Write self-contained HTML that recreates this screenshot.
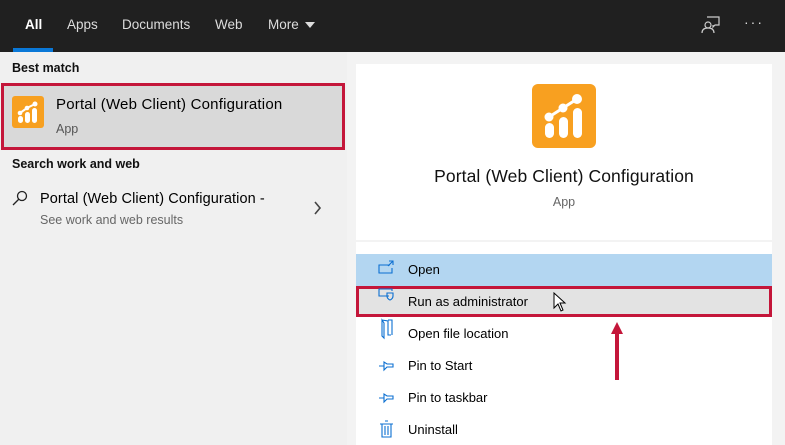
<!DOCTYPE html><html><head><style>
*{margin:0;padding:0;box-sizing:border-box}
body{width:785px;height:445px;overflow:hidden;background:#f0f0f0;font-family:"Liberation Sans",sans-serif;position:relative;font-size:13px;color:#000}
.a{position:absolute}
.hdr{left:0;top:0;width:785px;height:52px;background:#202020}
.tab{top:17px;color:#ddd;font-size:13.5px}
</style></head><body>
<div class="a hdr"></div>
<div class="a tab" style="left:25px;color:#fff;font-weight:bold">All</div>
<div class="a" style="left:13px;top:48px;width:40px;height:4px;background:#0a78d7"></div>
<div class="a tab" style="left:67px">Apps</div>
<div class="a tab" style="left:122px">Documents</div>
<div class="a tab" style="left:215px">Web</div>
<div class="a tab" style="left:268px">More</div>
<svg class="a" style="left:305px;top:22px" width="10" height="6"><path d="M0 0H10L5 6Z" fill="#ddd"/></svg>
<svg class="a" style="left:701px;top:16px" width="20" height="18" fill="none" stroke="#ccc" stroke-width="1.2"><path d="M6 1H18V9H14L12 11V9"/><circle cx="7" cy="9" r="3"/><path d="M1 17C1 13 4 12 7 12S13 13 13 17"/></svg>
<div class="a" style="left:744px;top:14px;color:#ddd;font-size:14px;letter-spacing:2px">···</div>
<div class="a" style="left:12px;top:61px;font-weight:bold;font-size:12.5px;color:#111">Best match</div>
<div class="a" style="left:1px;top:83px;width:344px;height:67px;background:#d9d9d9;border:3px solid #c4163a"></div>
<div class="a" style="left:12px;top:96px;width:32px;height:32px;background:#f7a020;border-radius:3px"></div>
<svg class="a" style="left:12px;top:96px" width="32" height="32" fill="#fff"><rect x="6" y="20" width="5" height="7" rx="2.5"/><rect x="13" y="16" width="5" height="11" rx="2.5"/><rect x="20" y="12" width="5" height="15" rx="2.5"/><path d="M8 17L15 12L23 8" stroke="#fff" stroke-width="2" fill="none"/><circle cx="8" cy="17" r="2.3"/><circle cx="15" cy="12" r="2.3"/><circle cx="23" cy="8" r="2.5"/></svg>
<div class="a" style="left:56px;top:96px;font-size:15px;letter-spacing:0.2px;color:#000">Portal (Web Client) Configuration</div>
<div class="a" style="left:56px;top:122px;font-size:12.5px;color:#555">App</div>
<div class="a" style="left:12px;top:157px;font-weight:bold;font-size:12.5px;color:#111">Search work and web</div>
<svg class="a" style="left:11px;top:190px" width="18" height="18" fill="none" stroke="#222" stroke-width="1.3"><circle cx="11" cy="6" r="4.5"/><path d="M8 9L2 15"/></svg>
<div class="a" style="left:40px;top:191px;font-size:14.5px;letter-spacing:0.1px">Portal (Web Client) Configuration -</div>
<div class="a" style="left:40px;top:213px;font-size:12.5px;color:#666">See work and web results</div>
<svg class="a" style="left:314px;top:201px" width="8" height="14" fill="none" stroke="#444" stroke-width="1.6"><path d="M1 1L6 7L1 13"/></svg>
<div class="a" style="left:347px;top:52px;width:438px;height:393px;background:#f3f3f3"></div>
<div class="a" style="left:356px;top:64px;width:416px;height:176px;background:#fff"></div>
<div class="a" style="left:356px;top:242px;width:416px;height:203px;background:#fff"></div>
<div class="a" style="left:532px;top:84px;width:64px;height:64px;background:#f8a020;border-radius:6px"></div>
<svg class="a" style="left:532px;top:84px" width="64" height="64" fill="#fff"><rect x="13" y="39" width="9" height="15" rx="4.5"/><rect x="27" y="33" width="9" height="21" rx="4.5"/><rect x="41" y="24" width="9" height="30" rx="4.5"/><path d="M17 33L31 24L45 15" stroke="#fff" stroke-width="3" fill="none"/><circle cx="17" cy="33" r="4.5"/><circle cx="31" cy="24" r="4.5"/><circle cx="45" cy="15" r="5"/></svg>
<div class="a" style="left:356px;width:416px;top:166px;text-align:center;font-size:17.5px;letter-spacing:0.1px;color:#111">Portal (Web Client) Configuration</div>
<div class="a" style="left:356px;width:416px;top:195px;text-align:center;font-size:12.5px;color:#666">App</div>
<div class="a" style="left:356px;top:254px;width:416px;height:32px;background:#b3d6f1"></div>
<div class="a" style="left:356px;top:286px;width:416px;height:31px;background:#e3e3e3;border:3px solid #c4163a"></div>
<div class="a" style="left:408px;top:262px;font-size:13px">Open</div>
<div class="a" style="left:408px;top:294px;font-size:13px">Run as administrator</div>
<div class="a" style="left:408px;top:326px;font-size:13px">Open file location</div>
<div class="a" style="left:408px;top:358px;font-size:13px">Pin to Start</div>
<div class="a" style="left:408px;top:390px;font-size:13px">Pin to taskbar</div>
<div class="a" style="left:408px;top:422px;font-size:13px">Uninstall</div>
<svg class="a" style="left:378px;top:260px" width="20" height="180" fill="none" stroke="#0b6fd1" stroke-width="1.1">
<path d="M12 5H1V13H14V8M11 1H15V5M15 1L10 6"/>
<path d="M11 36H1V29H14V31M9 33H15V36C15 39 12 40 12 40C12 40 9 39 9 36Z"/>
<path d="M4 60V76L6 78V63ZM4 60L10 61V75H13M10 60H14V75"/>
<path d="M1 106H6M6 102V110L9 107H15V104H9Z"/>
<path d="M1 138H6M6 134V142L9 139H15V136H9Z"/>
<path d="M4 164V177H13V164M2 164H15M7 161H10M7 166V175M10 166V175"/>
</svg>
<svg class="a" style="left:553px;top:292px" width="16" height="22"><path d="M1 1V16L5 12L8 19L10 18L7 11H12Z" fill="#fff" stroke="#000"/></svg>
<svg class="a" style="left:607px;top:322px" width="20" height="60"><path d="M10 0L16 12H12V58H8V12H4Z" fill="#c4163a"/></svg>
</body></html>
